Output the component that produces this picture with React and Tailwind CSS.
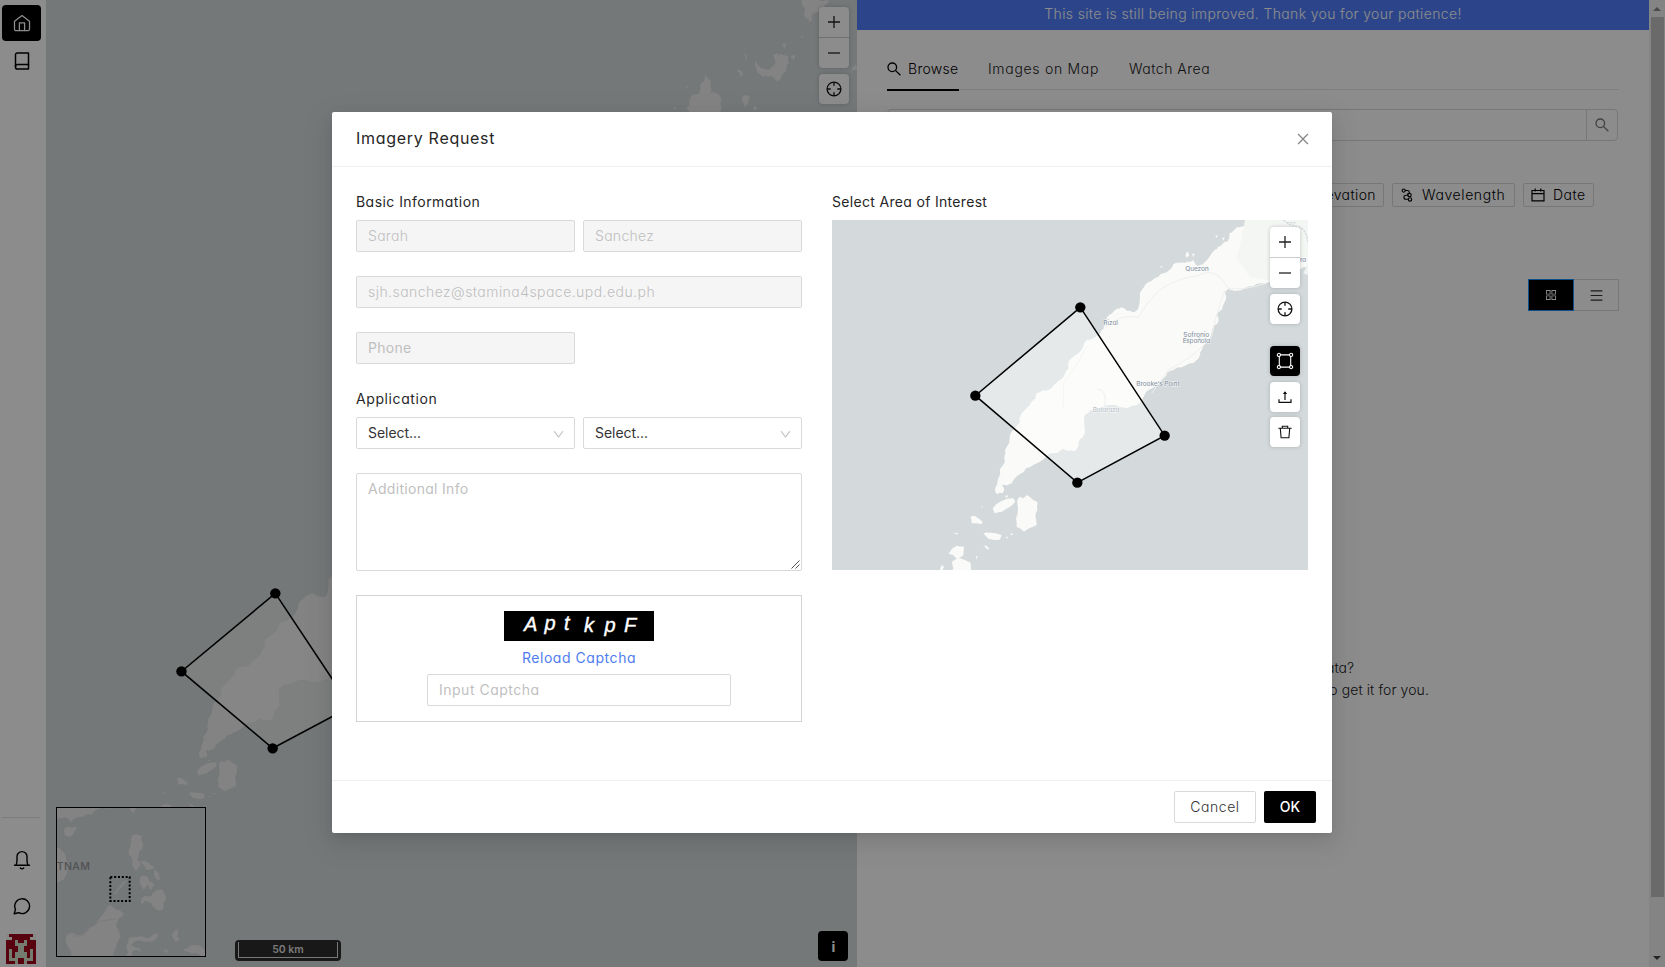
import React from "react";
import { AiOutlineAppstore, AiOutlineClose, AiOutlineDown, AiOutlineMenu, AiOutlineSearch } from "react-icons/ai";

/* ---------- coastline helpers ---------- */

function makeRandom(seed) {
  let s = seed;
  return () => {
    s = (s * 16807) % 2147483647;
    return s / 2147483647 - 0.5;
  };
}

// Subdivides a ring and nudges each midpoint so that it reads as a natural coast.
function coast(ring, seed = 7, rough = 0.22, levels = 2) {
  const rnd = makeRandom(seed);
  let pts = ring;
  for (let l = 0; l < levels; l++) {
    const next = [];
    pts.forEach(([x, y], i) => {
      const [nx, ny] = pts[(i + 1) % pts.length];
      const len = Math.min(Math.hypot(nx - x, ny - y), 40);
      const off = rnd() * len * rough * 2;
      const d = Math.hypot(nx - x, ny - y) || 1;
      next.push([x, y]);
      next.push([(x + nx) / 2 - ((ny - y) / d) * off, (y + ny) / 2 + ((nx - x) / d) * off]);
    });
    pts = next;
  }
  return "M" + pts.map(([x, y]) => `${x.toFixed(1)} ${y.toFixed(1)}`).join("L") + "Z";
}

const MAINLAND = [
  [1275, 110], [1275, 138], [1250, 142], [1228, 160], [1222, 185], [1200, 198], [1180, 215], [1165, 235], [1150, 252],
  [1132, 258], [1120, 240], [1095, 248], [1060, 253], [1030, 280], [1000, 298], [975, 316], [960, 350], [955, 385], [938, 396],
  [905, 382], [880, 395], [860, 415], [852, 440], [835, 465], [800, 480], [775, 520], [745, 550], [735, 580], [710, 608],
  [690, 628], [650, 640], [635, 665], [605, 700], [598, 730], [570, 765], [555, 810], [555, 845], [535, 895], [525, 925],
  [530, 942], [548, 940], [552, 928], [545, 915], [575, 910], [600, 882], [640, 855], [690, 820], [730, 806], [762, 814],
  [775, 790], [795, 750], [792, 715], [812, 690], [850, 680], [900, 682], [940, 676], [965, 662], [985, 630], [1030, 595],
  [1060, 570], [1110, 550], [1140, 525], [1150, 495], [1170, 475], [1180, 440], [1196, 420], [1192, 400], [1212, 370],
  [1215, 340], [1225, 325], [1250, 332], [1300, 318], [1345, 308], [1400, 290], [1450, 262], [1500, 250], [1500, 110],
];

const ISLETS = [
  [[518, 985], [545, 963], [580, 955], [586, 965], [570, 980], [545, 995], [524, 1000]],
  [[592, 960], [600, 950], [610, 955], [622, 945], [640, 960], [653, 968], [652, 990], [646, 1005], [650, 1035], [628, 1045], [612, 1055], [590, 1040], [588, 1015], [594, 985]],
  [[452, 1010], [465, 1008], [488, 1026], [484, 1033], [455, 1030]],
  [[490, 1060], [510, 1058], [545, 1066], [540, 1079], [505, 1076]],
  [[386, 1120], [410, 1097], [432, 1100], [430, 1125], [412, 1138], [400, 1125]],
  [[396, 1145], [420, 1135], [452, 1148], [452, 1190], [385, 1190], [400, 1165]],
  [[490, 1096], [500, 1098], [508, 1108], [500, 1107]],
  [[556, 1072], [564, 1070], [562, 1076]],
  [[570, 1062], [580, 1061], [576, 1066]],
  [[468, 1128], [474, 1130], [470, 1139]],
  [[400, 1058], [414, 1060], [412, 1064]],
  [[360, 1170], [366, 1155], [372, 1160], [368, 1175]],
  [[1096, 225], [1104, 214], [1108, 226], [1100, 234]],
  [[1116, 222], [1124, 222], [1120, 232]],
  [[1020, 260], [1028, 258], [1024, 264]],
  [[1186, 168], [1194, 166], [1190, 174]],
  [[1206, 176], [1214, 172], [1210, 182]],
  [[555, 948], [565, 946], [560, 954]],
  [[484, 980], [488, 978], [488, 984]],
];

const LAND_PATHS = [coast(MAINLAND, 11, 0.16, 2), ...ISLETS.map((r, i) => coast(r, 31 + i * 5, 0.08, 1))].join("");

const NORTH_ISLANDS = [
  [[148, 345], [148, 305], [158, 282], [178, 280], [183, 250], [195, 220], [205, 235], [210, 278], [230, 280], [244, 300], [240, 345]],
  [[345, 195], [350, 185], [365, 205], [395, 200], [405, 180], [398, 165], [425, 162], [445, 170], [440, 205], [425, 225], [412, 245], [400, 230], [370, 230], [350, 212]],
  [[484, 0], [565, 0], [560, 12], [540, 25], [515, 45], [508, 68], [495, 50], [490, 20]],
  [[305, 295], [320, 285], [330, 290], [322, 315], [312, 322]],
  [[292, 210], [308, 225], [302, 235]],
  [[312, 160], [322, 172], [314, 180]],
  [[428, 130], [438, 134], [434, 146]],
  [[452, 170], [464, 168], [460, 180]],
  [[640, 200], [650, 195], [650, 210], [632, 215]],
  [[484, 108], [490, 110], [486, 116]],
  [[340, 322], [348, 318], [350, 328], [342, 332]],
  [[136, 260], [144, 258], [142, 266]],
  [[100, 325], [106, 322], [106, 330]],
].map((r, i) => coast(r, 71 + i * 3, 0.26, 2)).join("");

const INSET_LAND = [
  [[160, 735], [330, 735], [322, 748], [290, 750], [275, 765], [240, 772], [218, 780], [214, 795], [206, 778], [180, 774], [160, 780]],
  [[192, 812], [205, 800], [230, 802], [222, 820], [208, 832], [194, 826]],
  [[160, 862], [180, 866], [196, 890], [205, 920], [200, 945], [180, 965], [160, 972]],
  [[388, 745], [408, 745], [402, 762], [392, 754]],
  [[396, 828], [424, 828], [430, 852], [418, 875], [412, 900], [422, 915], [408, 935], [396, 915], [386, 885], [392, 862]],
  [[420, 905], [445, 910], [462, 925], [440, 930]],
  [[462, 932], [478, 942], [480, 962], [468, 958]],
  [[424, 950], [440, 950], [448, 975], [432, 990], [422, 975]],
  [[448, 965], [462, 975], [452, 992]],
  [[422, 1025], [435, 1008], [455, 1008], [470, 990], [488, 992], [498, 1020], [488, 1050], [468, 1050], [455, 1030], [438, 1022], [426, 1035]],
  [[342, 1006], [346, 1000], [378, 962], [382, 964], [350, 1002]],
  [[198, 1130], [215, 1120], [242, 1125], [265, 1105], [290, 1088], [312, 1058], [332, 1036], [350, 1050], [372, 1062], [355, 1078], [348, 1095], [362, 1128], [350, 1150], [338, 1195], [216, 1195], [202, 1160]],
  [[385, 1140], [400, 1132], [445, 1136], [475, 1122], [470, 1136], [440, 1146], [402, 1146], [392, 1160], [415, 1165], [425, 1178], [400, 1172], [392, 1195], [378, 1195], [380, 1160]],
  [[516, 1128], [534, 1108], [532, 1130], [540, 1140], [526, 1148]],
  [[550, 1168], [600, 1158], [620, 1170], [620, 1195], [590, 1180], [558, 1176]],
  [[488, 1172], [508, 1174], [500, 1180]],
].map((r, i) => coast(r, 41 + i * 3, 0.16, 2)).join("");

/* ---------- icons ---------- */

const stroke = { fill: "none", stroke: "currentColor", strokeLinecap: "round", strokeLinejoin: "round" };

const HomeIcon = () => (
  <svg width="18" height="18" viewBox="0 0 18 18" {...stroke} strokeWidth="1.3">
    <path d="M1.5 7.2 9 1.6l7.5 5.6v8a1.5 1.5 0 0 1-1.5 1.5H3a1.5 1.5 0 0 1-1.5-1.500Z" />
    <path d="M6.400 16.500V8.900h5.200v7.600" />
  </svg>
);

const BookIcon = () => (
  <svg width="18" height="18" viewBox="0 0 18 18" {...stroke} strokeWidth="1.500">
    <path d="M15.500 1H4.300A1.800 1.800 0 0 0 2.500 2.800v12.400A1.800 1.800 0 0 0 4.300 17h11.200Z" />
    <path d="M15.500 12.600H4.300a1.800 1.800 0 0 0-1.800 1.800" />
  </svg>
);

const BellIcon = () => (
  <svg width="18" height="20" viewBox="0 0 18 20" {...stroke} strokeWidth="1.400">
    <path d="M1.500 15.200h15" />
    <path d="M3 15.200c.9-1.600 1-3.200 1-5.200V6.600a5 5 0 0 1 10 0V10c0 2 .1 3.600 1 5.200" />
    <path d="M7.300 17.900c.9.800 2.500.8 3.400 0" />
  </svg>
);

const ChatIcon = () => (
  <svg width="18" height="18" viewBox="0 0 18 18" {...stroke} strokeWidth="1.400">
    <path d="M1.200 16.800l1.300-4.400A7.400 7.400 0 1 1 5.700 15.700Z" />
  </svg>
);

const TargetIcon = () => (
  <svg width="16" height="16" viewBox="0 0 16 16" {...stroke} strokeWidth="1.300">
    <circle cx="8" cy="8" r="6.900" />
    <path d="M8 1.100v3.600M8 11.300v3.600M1.100 8h3.600M11.300 8h3.600" strokeLinecap="butt" />
  </svg>
);

const ShapeIcon = () => (
  <svg width="18" height="18" viewBox="0 0 18 18" {...stroke} strokeWidth="1.100">
    <path d="M4.400 2.900h9.200M4.400 15.100h9.200M3.300 4.300v9.400M14.700 4.300v9.400" />
    <circle cx="2.900" cy="2.900" r="1.600" /><circle cx="15.100" cy="2.900" r="1.600" />
    <circle cx="2.900" cy="15.100" r="1.600" /><circle cx="15.100" cy="15.100" r="1.600" />
  </svg>
);

const UploadIcon = () => (
  <svg width="14" height="14" viewBox="0 0 14 14" {...stroke} strokeLinecap="butt" strokeLinejoin="miter" strokeWidth="1.200">
    <path d="M1 9.200v3.200h12V9.200M7 10V2" />
    <path d="M4.800 4 7 1.200 9.200 4Z" fill="currentColor" stroke="none" />
  </svg>
);

const TrashIcon = () => (
  <svg width="14" height="14" viewBox="0 0 14 14" {...stroke} strokeLinejoin="miter" strokeWidth="1.100">
    <path d="M.8 3.300h12.400M4.300 3.100V1.200h5.400v1.900M2.300 3.500l.8 9.300h7.800l.8-9.300" />
  </svg>
);

const MagnifierIcon = () => (
  <svg width="14" height="14" viewBox="0 0 14 14" {...stroke} strokeLinecap="butt" strokeWidth="1.300">
    <circle cx="5.300" cy="5.300" r="4.300" />
    <path d="m8.400 8.400 5 4.800" />
  </svg>
);

const WaveIcon = () => (
  <svg width="12" height="14" viewBox="0 0 12 14" {...stroke} strokeWidth="1.100">
    <circle cx="2.700" cy="2.600" r="1.600" />
    <path d="M4.300 2.500h2.200a1.700 1.700 0 0 1 0 3.600" />
    <circle cx="8.500" cy="7" r="1.700" />
    <path d="M6.800 7.200H4.900a1.900 1.900 0 0 0 0 4h2" />
    <circle cx="9" cy="11.400" r="1.700" />
  </svg>
);

const CalendarIcon = () => (
  <svg width="14" height="14" viewBox="0 0 14 14" {...stroke} strokeLinecap="butt" strokeLinejoin="miter" strokeWidth="1.200">
    <path d="M1 2.500h12v10.400H1ZM1 5.700h12M4.200.6v3M9.800.6v3" />
  </svg>
);

const AVATAR = [
  "g........g",
  "gg......gg",
  "...p..p...",
  "...pppp...",
  "....pp....",
  ".p..pp..p.",
  ".p.pppp.p.",
  ".p.pppp.p.",
  ".ppp..ppp.",
  "...p..p...",
];

const Avatar = () => (
  <svg width="30" height="30" viewBox="0 0 10 10" shapeRendering="crispEdges">
    <rect width="10" height="10" fill="#a3051c" />
    {AVATAR.flatMap((row, y) =>
      row.split("").map((c, x) =>
        c === "." ? null : <rect key={`${x}-${y}`} x={x} y={y} width="1" height="1" fill={c === "g" ? "#f5f7f2" : "#d3e0ca"} />
      )
    )}
  </svg>
);

/* ---------- map controls ---------- */

const controlShadow = "shadow-[0_0_4px_rgba(0,0,0,0.2)]";

function ZoomControl() {
  return (
    <div className="flex flex-col gap-1.5">
      <div className={`flex h-[61px] w-[30px] flex-col rounded bg-white text-[#222] ${controlShadow}`}>
        <button className="flex h-[31px] items-center justify-center border-b border-[#ccc]" aria-label="Zoom in">
          <svg width="12" height="12" viewBox="0 0 12 12"><path d="M0 6h12M6 0v12" stroke="currentColor" strokeWidth="1.300" /></svg>
        </button>
        <button className="flex h-[30px] items-center justify-center" aria-label="Zoom out">
          <svg width="12" height="12" viewBox="0 0 12 12"><path d="M0 6h12" stroke="currentColor" strokeWidth="1.300" /></svg>
        </button>
      </div>
      <button className={`flex size-[30px] items-center justify-center rounded bg-white text-[#111] ${controlShadow}`} aria-label="Center map">
        <TargetIcon />
      </button>
    </div>
  );
}

function Polygon({ radius = 15.5, line = 4.5 }) {
  return (
    <g>
      <path d="M781 382 1034 767 772 908 466 647Z" fill="#fff" fillOpacity="0.4" stroke="#000" strokeWidth={line} />
      {[[781, 382], [1034, 767], [772, 908], [466, 647]].map(([x, y]) => (
        <circle key={x} cx={x} cy={y} r={radius} fill="#000" />
      ))}
    </g>
  );
}

/* ---------- page sections ---------- */

function Sidebar() {
  return (
    <nav className="flex w-[46px] shrink-0 flex-col items-center bg-white">
      <div className="mt-[5px] mr-[3px] flex h-9 w-[39px] items-center justify-center rounded bg-black pl-px text-white"><HomeIcon /></div>
      <div className="mt-[11px] mr-0.5 flex text-black"><BookIcon /></div>
      <div className="mt-auto mr-1 h-px w-[38px] bg-[#e4e4e4]" />
      <div className="mt-[32px] mr-0.5 flex text-black"><BellIcon /></div>
      <div className="mt-[27px] mr-0.5 flex text-black"><ChatIcon /></div>
      <div className="mt-[19px] mr-1 mb-[3px] flex"><Avatar /></div>
    </nav>
  );
}

function BaseMap() {
  return (
    <section className="relative w-[811px] shrink-0 overflow-hidden bg-[#d4dadc]">
      <svg width="811" height="967" viewBox="0 0 811 967" className="block">
        <g transform="translate(-3.400 480.800) scale(.298 .2946)">
          <path d={LAND_PATHS} fill="#f1eeee" />
          <Polygon radius={17.5} line={5.2} />
        </g>
        <g transform="translate(594 0) scale(.33333)"><path d={NORTH_ISLANDS} fill="#f1eeee" /></g>
      </svg>
      <div className="absolute top-[7px] right-2"><ZoomControl /></div>
      <div className="absolute bottom-2.5 left-2.5 size-[150px] border border-black">
        <svg width="148" height="148" viewBox="171 745 444 444" className="block bg-[#d4dadc]">
          <path d={INSET_LAND} fill="#f1eeee" />
          <path d="M220 1128q30 8 50-24l30-20 48-6" fill="none" stroke="#e0d4d4" strokeWidth="2" />
          <text x="170" y="932" fontSize="32" fontFamily="Inter, sans-serif" fontWeight="500" fill="#97979c" textLength="100">TNAM</text>
          <rect x="331" y="952" width="58" height="72" fill="none" stroke="#000" strokeWidth="6" strokeDasharray="6 5.500" />
        </svg>
      </div>
      <div className="absolute bottom-1.5 left-[189px] flex h-[21px] w-[106px] rounded bg-[#2c2c2c] px-[3px] pt-[2px] pb-[3px]">
        <div className="flex-1 border border-t-0 border-[#ddd] text-center text-[10.500px] leading-[15px] font-semibold text-[#ddd]">50 km</div>
      </div>
      <div className="absolute right-[9px] bottom-1.5 flex size-[30px] items-center justify-center rounded bg-black pt-px pl-px font-['Open_Sans'] text-[14px] font-bold text-white">i</div>
    </section>
  );
}

function BrowsePanel() {
  return (
    <section className="flex w-[792px] shrink-0 flex-col bg-white text-sm text-[#222]">
      <div className="flex h-[30px] items-center justify-center bg-[#507efb] pb-0.5 tracking-[0.35px] text-white">
        This site is still being improved. Thank you for your patience!
      </div>
      <div className="flex flex-col pr-[30px] pl-[30px]">
        <div className="mt-[19px] flex h-[41px] border-b border-[#e6e6e6]">
          <div className="mr-[29px] flex h-[42px] w-[72px] items-center gap-[7px] border-b-2 border-black text-black"><MagnifierIcon /><span className="tracking-[0.3px]">Browse</span></div>
          <div className="flex w-[141px] items-center pb-px tracking-[0.700px]">Images on Map</div>
          <div className="flex items-center pb-px tracking-[0.5px]">Watch Area</div>
        </div>
        <div className="mt-[19px] flex h-8 w-[731px] rounded-sm border border-[#d9d9d9]">
          <div className="flex-1" />
          <div className="flex w-[31px] items-center justify-center border-l border-[#d9d9d9] text-[#777]"><MagnifierIcon /></div>
        </div>
        <div className="mt-[42px] flex h-6 justify-end gap-2 pr-[25px] text-black">
          <div className="flex items-center rounded-xs border border-[#d9d9d9] px-[7px] tracking-[0.4px]">Elevation</div>
          <div className="flex w-[123px] items-center gap-[9px] rounded-xs border border-[#d9d9d9] pl-2 tracking-[0.6px]"><WaveIcon />Wavelength</div>
          <div className="flex w-[71px] items-center gap-2 rounded-xs border border-[#d9d9d9] pl-[7px] tracking-[0.5px]"><CalendarIcon />Date</div>
        </div>
        <div className="mt-[72px] flex h-8 justify-end">
          <div className="flex w-[46px] items-center justify-center border border-[#1890ff] bg-black text-white"><AiOutlineAppstore size={14} /></div>
          <div className="flex w-[45px] items-center justify-center border border-l-0 border-[#d9d9d9] text-[#333]"><AiOutlineMenu size={15} /></div>
        </div>
        <div className="mt-[346px] pr-[265px] text-right leading-[22px]">Looking for other data?</div>
        <div className="pr-[190px] text-right leading-[22px] tracking-[0.1px]">Send a request to get it for you.</div>
      </div>
    </section>
  );
}

function Scrollbar() {
  return (
    <div className="flex flex-1 flex-col items-center justify-between bg-[#f1f1f1] py-[7px]">
      <svg width="8" height="4" viewBox="0 0 8 4"><path d="M4 0 8 4H0Z" fill="#888" /></svg>
      <div className="mt-[6px] mb-auto h-[880px] w-[13px] bg-[#c1c1c1]" />
      <svg width="8" height="4" viewBox="0 0 8 4"><path d="M0 0h8L4 4Z" fill="#444" /></svg>
    </div>
  );
}

const inputBase = "flex h-8 items-center rounded-xs border border-[#d9d9d9] px-[11px]";

function RequestForm() {
  return (
    <div className="flex w-[446px] flex-col">
      <h3 className="mb-[7px] leading-[22px] font-normal tracking-[0.450px]">Basic Information</h3>
      <div className="grid grid-cols-2 gap-2 tracking-[0.3px] text-[#bfbfbf]">
        <div className={`${inputBase} bg-[#f5f5f5]`}>Sarah</div>
        <div className={`${inputBase} bg-[#f5f5f5]`}>Sanchez</div>
      </div>
      <div className={`${inputBase} mt-6 bg-[#f5f5f5] tracking-[0.450px] text-[#bfbfbf]`}>sjh.sanchez@stamina4space.upd.edu.ph</div>
      <div className={`${inputBase} mt-6 w-[219px] bg-[#f5f5f5] font-normal tracking-[0.3px] text-[#bfbfbf]`}>Phone</div>
      <h3 className="mt-6 mb-[7px] leading-[22px] font-normal tracking-[0.600px]">Application</h3>
      <div className="grid grid-cols-2 gap-2 text-[#333]">
        {["orbit", "purpose"].map((k) => (
          <div key={k} className={`${inputBase} justify-between pr-[9px] font-normal tracking-[-0.05px]`}>Select...<AiOutlineDown size={13} className="mt-[3px] text-[#bfbfbf]" /></div>
        ))}
      </div>
      <div className="relative mt-6 h-[98px] rounded-xs border border-[#d9d9d9] px-[11px] pt-1 leading-[22px] font-normal tracking-[0.300px] text-[#bfbfbf]">
        Additional Info
        <svg width="9" height="9" viewBox="0 0 9 9" className="absolute right-px bottom-px"><path d="M.5 8.500l8-8M4.500 8.500l4-4" stroke="#555" strokeWidth="1" /></svg>
      </div>
      <div className="mt-6 flex h-[127px] flex-col items-center border border-[#d3d3d3] pt-[15px]">
        <svg width="150" height="30" viewBox="0 0 150 30">
          <rect width="150" height="30" fill="#000" />
          <g fill="#fff" stroke="#fff" strokeWidth="0.400" fontFamily="'Liberation Sans', sans-serif" fontStyle="italic" fontSize="20">
            <text x="20" y="19.500">A</text>
            <text x="40.500" y="19">p</text>
            <text x="60" y="19">t</text>
            <text x="80" y="21">k</text>
            <text x="100.500" y="21">p</text>
            <text x="120" y="21">F</text>
          </g>
        </svg>
        <a className="mt-1.5 leading-[22px] font-normal tracking-[0.550px] text-[#4f7df0]">Reload Captcha</a>
        <div className={`${inputBase} mt-[5px] w-[304px] font-normal tracking-[0.500px] text-[#bfbfbf]`}>Input Captcha</div>
      </div>
    </div>
  );
}

function AreaMap() {
  const label = { fontFamily: "Inter, sans-serif", fontSize: 20, fontWeight: 500, fill: "#8f9ba8", stroke: "#fff", strokeWidth: 3, strokeOpacity: 0.7, paintOrder: "stroke", textAnchor: "middle" };
  return (
    <div className="flex w-[476px] flex-col">
      <h3 className="mb-[7px] leading-[22px] font-normal tracking-[0.320px]">Select Area of Interest</h3>
      <div className="relative h-[350px]">
        <svg width="476" height="350" viewBox="36 120 1428 1050" className="block bg-[#d4dadc]">
          <path d={LAND_PATHS} fill="#fafaf8" />
          <path d="M1275 120 1262 190 1250 235 1290 292 1345 300 1464 240V120Z" fill="#f4f6f4" />
          <g fill="none" stroke="#efefee" strokeWidth="3">
            <path d="M860 440q40-40 95-28 25-45 60-80 60-40 120-45 50-30 90 38 50 8 120-18M1215 330q-30 80-40 140-50 60-130 100l-50 70M800 500q-30 60-70 110v70" />
            <path d="M833 627q25 4 22 35v22" stroke="#e2e5e6" />
          </g>
          <path d="M1390 120q25 20 50 22 20 10 24 45M1400 128h30" fill="none" stroke="#d4dadc" strokeWidth="4" strokeDasharray="7 3" />
          <path d="M1464 250 1450 280 1464 286Z" fill="#f1f3f3" />
          <g {...label}>
            <text x="1131" y="273" textLength="70">Quezon</text>
            <text x="872" y="435" textLength="44">Rizal</text>
            <text x="1129" y="472" textLength="78">Sofronio</text>
            <text x="1129" y="490" textLength="82">Española</text>
            <text x="1014" y="619" textLength="130">Brooke's Point</text>
            <text x="858" y="695" textLength="80">Bataraza</text>
            <text x="1449" y="247" textLength="18">ra</text>
          </g>
          <Polygon />
        </svg>
        <div className="absolute top-[7px] right-2 flex flex-col">
          <ZoomControl />
          <button className={`mt-[22px] flex size-[30px] items-center justify-center rounded bg-black text-white ${controlShadow}`} aria-label="Draw area"><ShapeIcon /></button>
          <button className={`mt-1.5 flex size-[30px] items-center justify-center rounded bg-white text-[#111] ${controlShadow}`} aria-label="Upload area"><UploadIcon /></button>
          <button className={`mt-[5px] flex size-[30px] items-center justify-center rounded bg-white text-[#111] ${controlShadow}`} aria-label="Delete area"><TrashIcon /></button>
        </div>
      </div>
    </div>
  );
}

function RequestDialog() {
  return (
    <div className="flex h-[721px] w-[1000px] flex-col rounded-xs bg-white text-sm text-[#262626] shadow-[0_3px_6px_-4px_rgba(0,0,0,0.12),0_6px_16px_0_rgba(0,0,0,0.08),0_9px_28px_8px_rgba(0,0,0,0.05)]">
      <header className="flex h-[55px] items-center justify-between border-b border-[#f0f0f0] px-6 pb-0.5">
        <h2 className="text-base font-normal tracking-[0.700px]">Imagery Request</h2>
        <AiOutlineClose size={16} className="-mr-[3px] mt-0.5 text-[#888]" />
      </header>
      <div className="flex h-[613px] justify-between p-6">
        <RequestForm />
        <AreaMap />
      </div>
      <footer className="flex h-[53px] items-center justify-end gap-2 border-t border-[#f0f0f0] px-4">
        <button className="flex h-8 w-[82px] items-center justify-center rounded-xs border border-[#d9d9d9] tracking-[0.550px] text-[#333]">Cancel</button>
        <button className="flex h-8 w-[52px] items-center justify-center rounded-xs bg-black font-medium text-white">OK</button>
      </footer>
    </div>
  );
}

export default function App() {
  return (
    <div className="relative h-[967px] w-[1665px] overflow-hidden font-[Inter,'Open_Sans',sans-serif] font-light [font-feature-settings:'cv11']">
      <div className="flex h-full">
        <Sidebar />
        <BaseMap />
        <BrowsePanel />
        <Scrollbar />
      </div>
      <div className="absolute inset-0 flex items-start justify-center bg-black/45 pt-[112px] pr-px">
        <RequestDialog />
      </div>
    </div>
  );
}
